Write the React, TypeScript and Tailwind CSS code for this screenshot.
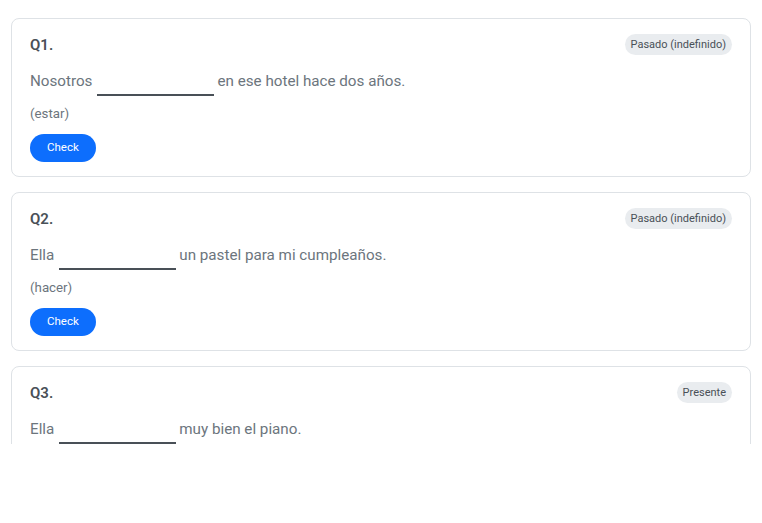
const questions = [
  { n: 1, before: "Nosotros", after: "en ese hotel hace dos años.", hint: "(estar)", tense: "Pasado (indefinido)" },
  { n: 2, before: "Ella", after: "un pastel para mi cumpleaños.", hint: "(hacer)", tense: "Pasado (indefinido)" },
  { n: 3, before: "Ella", after: "muy bien el piano.", hint: "(tocar)", tense: "Presente" },
];

function QuestionCard({ q }: { q: (typeof questions)[number] }) {
  return (
    <div className="rounded-lg border border-[#dee2e6] bg-white px-[18px] pt-[15px] pb-[14px]">
      <div className="flex h-[21px] items-center justify-between">
        <span className="pt-[1px] text-[15px] font-semibold text-[#495057]">Q{q.n}.</span>
        <span className="rounded-full bg-[#e9ecef] px-[6px] text-[11px] leading-[21px] text-[#495057]">
          {q.tense}
        </span>
      </div>
      <div className="mt-[11px] flex h-[30px] items-center text-[15.2px] text-[#6c757d]">
        <span className="pt-[1px]">{q.before}</span>
        <span className="ml-[5px] mr-[3px] h-[30px] w-[117px] border-b-2 border-[#495057]" />
        <span className="pt-[1px]">{q.after}</span>
      </div>
      <div className="mt-[8px] text-[13.3px] leading-[20px] text-[#6c757d]">{q.hint}</div>
      <button className="mt-[10px] h-[28px] rounded-full bg-[#0d6efd] px-[17px] text-[11.5px] text-white">
        Check
      </button>
    </div>
  );
}

export default function App() {
  return (
    <div className="h-[523px] bg-white font-['Roboto',sans-serif]">
      <div className="flex h-[444px] flex-col gap-[15px] overflow-hidden px-[11px] pt-[18px]">
        {questions.map((q) => (
          <QuestionCard key={q.n} q={q} />
        ))}
      </div>
    </div>
  );
}
